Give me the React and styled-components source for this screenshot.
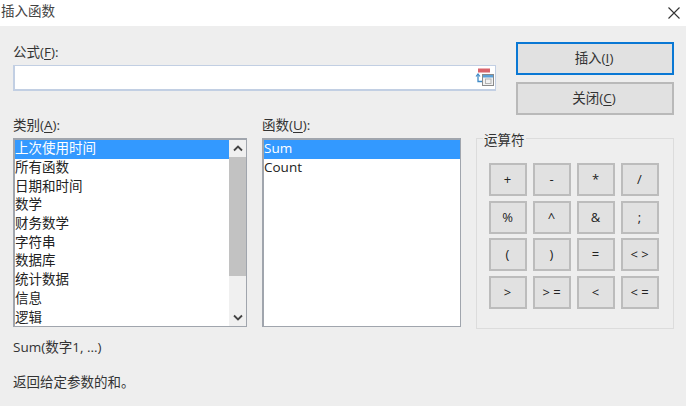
import React from "react";
import styled, { createGlobalStyle } from "styled-components";

const Global = createGlobalStyle`
  html, body { margin: 0; padding: 0; background: #eeeeee; }
  body { font-family: "Open Sans", "Noto Sans CJK SC", sans-serif; font-size: 13.5px; color: #222; }
`;
const Dialog = styled.div`
  width: 686px; height: 406px; overflow: hidden; background: #eeeeee; display: flex; flex-direction: column;
`;
const TitleBar = styled.div`
  height: 26px; flex: none; background: #fff; display: flex; align-items: center; justify-content: space-between;
  padding: 0 4px 4px 1px; box-sizing: border-box; font-size: 13.5px; color: #444; line-height: 20px;
`;
const CloseIcon = styled.svg`
  width: 14px; height: 14px; display: block; margin-right: 1px; margin-top: 3px;
`;
const Body = styled.div`
  flex: 1; display: flex; flex-direction: column; padding: 16px 12px 0 13px;
`;
const TopRow = styled.div`
  display: flex; height: 73px; flex: none; align-items: flex-start;
`;
const FormulaBlock = styled.div`
  width: 483px; margin-right: 20px; display: flex; flex-direction: column;
`;
const Label = styled.div`
  height: 23px; line-height: 20px; font-size: 13.5px; color: #333; white-space: nowrap;
  u { text-underline-offset: 2px; }
`;
const InputBox = styled.div`
  height: 26px; box-sizing: border-box; background: #fff; border: 1px solid #c2cfe3; border-width: 1px 1px 2px 2px;
  display: flex; justify-content: flex-end; align-items: center;
`;
const PickerIcon = styled.svg`
  width: 20px; height: 21px; display: block;
`;
const Actions = styled.div`
  width: 158px; display: flex; flex-direction: column; gap: 7px;
`;
const ActionButton = styled.div`
  height: 33px; box-sizing: border-box; background: #e1e1e1; display: flex; align-items: center; justify-content: center;
  border: 2px solid ${p => (p.$primary ? "#0a78d4" : "#b9b9b9")}; font-size: 13.5px; color: #333; line-height: 20px; padding: 0 2px 2px 0;
  u { text-underline-offset: 2px; }
`;
const ListRow = styled.div`
  display: flex; align-items: flex-start; flex: none;
`;
const ListColumn = styled.div`
  width: ${p => p.$w}px; margin-right: ${p => p.$mr}px; display: flex; flex-direction: column; flex: none;
`;
const ListBox = styled.div`
  height: 189px; box-sizing: border-box; background: #fff; border: 1px solid #a0a5ad; border-width: 2px 1px 1px 2px; display: flex; overflow: hidden;
`;
const Items = styled.div`
  flex: 1; min-width: 0; display: flex; flex-direction: column;
`;
const Item = styled.div`
  height: 18.7px; line-height: 17px; padding-left: 0; font-size: 13.5px; flex: none; white-space: nowrap;
  background: ${p => (p.$selected ? "#3399ff" : "transparent")}; color: ${p => (p.$selected ? "#fff" : "#222")};
  &:first-child { height: 19px; }
`;
const Scrollbar = styled.div`
  width: 17px; flex: none; display: flex; flex-direction: column; background: #f0f0f0;
`;
const ScrollEnd = styled.div`
  height: 17px; flex: none; background: #f0f0f0; display: flex; align-items: center; justify-content: center;
`;
const ScrollThumb = styled.div`
  height: 119px; flex: none; background: #c2c2c2;
`;
const ScrollGap = styled.div`
  flex: 1;
`;
const Chevron = styled.svg`
  width: 10px; height: 7px; display: block;
`;
const Group = styled.div`
  position: relative; width: 198px; height: 191px; box-sizing: border-box; margin-top: 23px; border: 1px solid #dcdcdc;
  padding: 24px 0 0 12px;
`;
const GroupTitle = styled.div`
  position: absolute; left: 6px; top: -8px; padding: 0 1px; background: #eeeeee; font-size: 13.5px; line-height: 18px; color: #333;
`;
const OpGrid = styled.div`
  display: grid; grid-template-columns: repeat(4, 38px); grid-auto-rows: 33px; column-gap: 6px; row-gap: 4.5px;
`;
const OpButton = styled.div`
  box-sizing: border-box; background: #e1e1e1; border: 2px solid #bcbcbc; display: flex; align-items: center; justify-content: center;
  font-size: 13px; font-weight: 500; color: #222; padding: 0 1px 1px 0; white-space: pre;
`;
const Signature = styled.div`
  margin-top: 9px; height: 18px; line-height: 18px; font-size: 13.5px; color: #333;
`;
const Description = styled.div`
  margin-top: 17px; height: 18px; line-height: 18px; font-size: 13.5px; color: #333;
`;

const categories = ["上次使用时间", "所有函数", "日期和时间", "数学", "财务数学", "字符串", "数据库", "统计数据", "信息", "逻辑"];
const ops = ["+", "-", "*", "/", "%", "^", "&", ";", "(", ")", "=", "< >", ">", "> =", "<", "< ="];

export default function App() {
  return (
    <Dialog>
      <Global />
      <TitleBar>
        <span>插入函数</span>
        <CloseIcon viewBox="0 0 14 14"><path d="M1.5 1.5L12.5 12.5M12.5 1.5L1.5 12.5" stroke="#333" strokeWidth="1.1" fill="none" /></CloseIcon>
      </TitleBar>
      <Body>
        <TopRow>
          <FormulaBlock>
            <Label>公式(<u>F</u>):</Label>
            <InputBox>
              <PickerIcon viewBox="0 0 20 21">
                <rect x="3" y="1.5" width="12" height="4" fill="#d9636b" />
                <path d="M3 7.5V14.5H7" stroke="#3f8ac6" strokeWidth="1.3" fill="none" />
                <path d="M1 9.5L3 7L5 9.5" stroke="#3f8ac6" strokeWidth="1.2" fill="none" />
                <rect x="7.5" y="7.5" width="11" height="11" fill="#f2f2f2" stroke="#8a8a8a" />
                <rect x="8" y="8" width="10" height="2.5" fill="#5ba0d8" />
                <rect x="10.5" y="12" width="5.5" height="4.5" fill="none" stroke="#b3b3b3" />
              </PickerIcon>
            </InputBox>
          </FormulaBlock>
          <Actions>
            <ActionButton $primary>插入(<u>I</u>)</ActionButton>
            <ActionButton>关闭(<u>C</u>)</ActionButton>
          </Actions>
        </TopRow>
        <ListRow>
          <ListColumn $w={234} $mr={15}>
            <Label>类别(<u>A</u>):</Label>
            <ListBox>
              <Items>
                {categories.map((c, i) => <Item key={c} $selected={i === 0}>{c}</Item>)}
              </Items>
              <Scrollbar>
                <ScrollEnd><Chevron viewBox="0 0 10 7"><path d="M1 5.5L5 1.5L9 5.5" stroke="#444" strokeWidth="1.8" fill="none" /></Chevron></ScrollEnd>
                <ScrollThumb />
                <ScrollGap />
                <ScrollEnd><Chevron viewBox="0 0 10 7"><path d="M1 1.5L5 5.5L9 1.5" stroke="#444" strokeWidth="1.8" fill="none" /></Chevron></ScrollEnd>
              </Scrollbar>
            </ListBox>
          </ListColumn>
          <ListColumn $w={199} $mr={15}>
            <Label>函数(<u>U</u>):</Label>
            <ListBox>
              <Items>
                <Item $selected>Sum</Item>
                <Item>Count</Item>
              </Items>
            </ListBox>
          </ListColumn>
          <Group>
            <GroupTitle>运算符</GroupTitle>
            <OpGrid>
              {ops.map(o => <OpButton key={o}>{o}</OpButton>)}
            </OpGrid>
          </Group>
        </ListRow>
        <Signature>Sum(数字1, ...)</Signature>
        <Description>返回给定参数的和。</Description>
      </Body>
    </Dialog>
  );
}
